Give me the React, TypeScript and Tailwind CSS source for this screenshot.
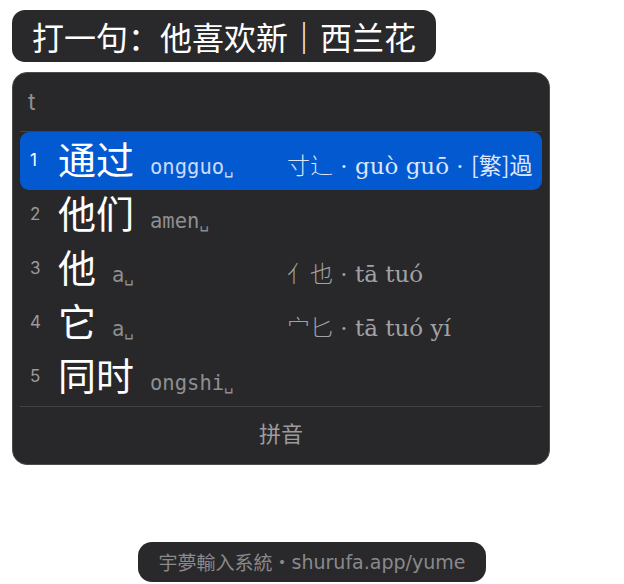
import React from "react";

type Row = { n: string; word: string; code: string; rad?: string; ann?: string; trad?: boolean; hl?: boolean };

const rows: Row[] = [
  { n: "1", word: "通过", code: "ongguo", rad: "寸辶", ann: " · guò guō · ", trad: true, hl: true },
  { n: "2", word: "他们", code: "amen" },
  { n: "3", word: "他", code: "a", rad: "亻也", ann: " · tā tuó" },
  { n: "4", word: "它", code: "a", rad: "宀匕", ann: " · tā tuó yí" },
  { n: "5", word: "同时", code: "ongshi" },
];

function CandRow({ r }: { r: Row }) {
  return (
    <div
      className={
        "flex items-center mx-[7px] rounded-[9px] " +
        (r.hl ? "bg-[#0259d0] h-[58px]" : "h-[54px]")
      }
    >
      <div
        className={
          "w-[38px] pl-[10px] text-[17px] font-['Inter','Noto_Sans',sans-serif] " +
          (r.hl ? "text-white" : "text-[#9a9a9c]")
        }
      >
        {r.n}
      </div>
      <div className="flex items-baseline">
        <div className="flex items-baseline w-[229px]">
          <span className="text-[38px] leading-none text-white font-['Noto_Sans_CJK_SC','Noto_Sans',sans-serif]">
            {r.word}
          </span>
          <span
            className={
              "ml-[16px] text-[20.5px] font-['DejaVu_Sans_Mono','Liberation_Mono',monospace] " +
              (r.hl ? "text-[#c9dbfb]" : "text-[#8f8f91]")
            }
          >
            {r.code}
            <span className="text-[16px]">␣</span>
          </span>
        </div>
        {r.ann && (
          <span
            className={
              "text-[23px] whitespace-nowrap font-['DejaVu_Serif','Liberation_Serif','Noto_Sans_CJK_SC',serif] " +
              (r.hl ? "text-[#dbe6ff]" : "text-[#a2a2a4]")
            }
          >
            <span className="font-light font-['Noto_Sans_CJK_SC',sans-serif]">{r.rad}</span>
            {r.ann}
            {r.trad && <span className="font-['Noto_Sans_CJK_SC',sans-serif]">[繁]過</span>}
          </span>
        )}
      </div>
    </div>
  );
}

export default function App() {
  return (
    <div className="w-[624px] h-[584px] bg-white">
      <div className="pt-[10px] pl-[12px]">
        <div className="inline-flex items-center h-[52px] px-[20px] rounded-[13px] bg-[#29292b] text-white text-[32px] leading-none font-['Noto_Sans_CJK_SC','Noto_Sans',sans-serif]">
          打一句：他喜欢新｜西兰花
        </div>
      </div>

      <div className="mt-[10px] ml-[12px] w-[538px] h-[393px] rounded-[15px] bg-[#28282b] border border-[#4c4c4f] flex flex-col">
        <div className="h-[58px] flex items-center pl-[15px] text-[23px] text-[#8e8e90] font-['Inter','Noto_Sans',sans-serif]">
          t
        </div>
        <div className="mx-[7px] h-px bg-[#434346]" />
        <div className="flex flex-col">
          <CandRow r={rows[0]} />
          <div className="-mt-[2px] flex flex-col">
            {rows.slice(1).map((r) => (
              <CandRow key={r.n} r={r} />
            ))}
          </div>
        </div>
        <div className="mx-[7px] mt-[2px] h-px bg-[#434346]" />
        <div className="flex-1 flex items-center justify-center pb-[6px] text-[22px] text-[#9c9c9e] font-['Noto_Sans_CJK_SC','Noto_Sans',sans-serif]">
          拼音
        </div>
      </div>

      <div className="mt-[77px] flex justify-center">
        <div className="h-[40px] px-[21px] rounded-[14px] bg-[#29292b] flex items-center text-[19px] text-[#8a8a8c] font-['Noto_Sans_CJK_SC','Noto_Sans',sans-serif]">
          宇夢輸入系統・
          <span className="font-['DejaVu_Sans',sans-serif]">shurufa.app/yume</span>
        </div>
      </div>
    </div>
  );
}
